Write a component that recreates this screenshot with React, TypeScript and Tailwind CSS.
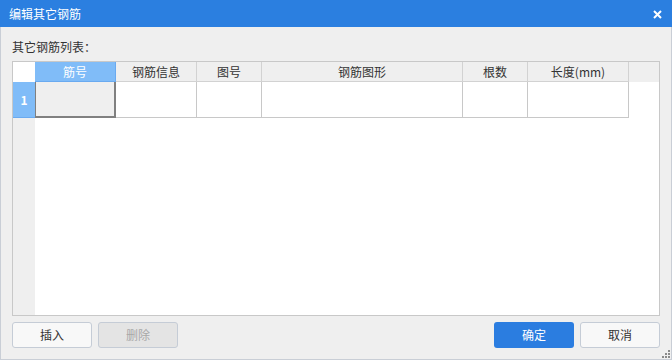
const font = {
  fontFamily: '"Noto Sans CJK SC", "Noto Sans", sans-serif',
};

const columns = [
  { name: "筋号", w: "w-[81px]" },
  { name: "钢筋信息", w: "w-[81px]" },
  { name: "图号", w: "w-[65px]" },
  { name: "钢筋图形", w: "w-[201px]" },
  { name: "根数", w: "w-[65px]" },
  { name: "长度(mm)", w: "w-[101px]" },
];

export default function App() {
  return (
    <div
      className="w-[672px] h-[360px] flex flex-col bg-[#efefef] text-[12px] text-[#333]"
      style={font}
    >
      {/* 标题栏 */}
      <div className="h-[27px] shrink-0 bg-[#2b7fe0] flex items-center justify-between pl-[9px] pr-[10px]">
        <span className="text-white text-[12px] leading-none">编辑其它钢筋</span>
        <svg width="9" height="9" viewBox="0 0 9 9" className="mt-[1px]">
          <path d="M1 1L8 8M8 1L1 8" stroke="#fff" strokeWidth="2" />
        </svg>
      </div>

      <div className="flex-1 flex flex-col border-x border-b border-[#c9ced6] px-[11px] relative">
        <div className="pt-[10px] h-[30px] leading-[20px] mb-[4px]">其它钢筋列表：</div>

        {/* 表格 */}
        <div className="h-[255px] border border-[#c8c8c8] flex flex-col bg-white">
          <div className="flex h-[20px] bg-[#efefef]">
            <div className="w-[22px] bg-white" />
            {columns.map((c, i) =>
              i === 0 ? (
                <div
                  key={c.name}
                  className={`${c.w} bg-[#80bcf8] border-r border-b border-[#6aaaf0] text-white flex items-center justify-center leading-none`}
                >
                  {c.name}
                </div>
              ) : (
                <div
                  key={c.name}
                  className={`${c.w} border-r border-b border-[#d2d2d2] flex items-center justify-center leading-none`}
                >
                  {c.name}
                </div>
              )
            )}
          </div>

          <div className="flex h-[36px]">
            <div className="w-[22px] bg-[#80bcf8] border-b border-[#6aaaf0] text-white font-bold flex items-center justify-center">
              1
            </div>
            {columns.map((c, i) =>
              i === 0 ? (
                <div
                  key={c.name}
                  className={`${c.w} bg-[#efefef] border-l border-r-2 border-b-2 border-[#808080]`}
                />
              ) : (
                <div key={c.name} className={`${c.w} border-r border-b border-[#c8c8c8]`} />
              )
            )}
          </div>

          <div className="flex-1 flex">
            <div className="w-[22px] bg-[#efefef]" />
            <div className="flex-1 bg-white" />
          </div>
        </div>

        {/* 按钮 */}
        <div className="flex items-center mt-[6px] h-[26px]">
          <button className="w-[80px] h-[26px] rounded-[3px] border border-[#c5ccd6] bg-[#f8f8f8] text-[#333] text-[12px]">
            插入
          </button>
          <button
            disabled
            className="ml-[6px] w-[80px] h-[26px] rounded-[3px] border border-[#c5ccd6] bg-[#e4e4e4] text-[#a8a8a8] text-[12px]"
          >
            删除
          </button>
          <div className="flex-1" />
          <button className="w-[80px] h-[26px] rounded-[3px] bg-[#2b7de0] text-white text-[12px]">
            确定
          </button>
          <button className="ml-[6px] w-[80px] h-[26px] rounded-[3px] border border-[#c5ccd6] bg-[#f8f8f8] text-[#333] text-[12px]">
            取消
          </button>
        </div>

        {/* 右下角拖拽 */}
        <svg width="8" height="8" viewBox="0 0 8 8" className="absolute right-[1px] bottom-[1px]">
          <rect x="6" y="0" width="2" height="2" fill="#8a8a8a" />
          <rect x="3" y="3" width="2" height="2" fill="#8a8a8a" />
          <rect x="6" y="3" width="2" height="2" fill="#8a8a8a" />
          <rect x="0" y="6" width="2" height="2" fill="#8a8a8a" />
          <rect x="3" y="6" width="2" height="2" fill="#8a8a8a" />
          <rect x="6" y="6" width="2" height="2" fill="#8a8a8a" />
        </svg>
      </div>
    </div>
  );
}
